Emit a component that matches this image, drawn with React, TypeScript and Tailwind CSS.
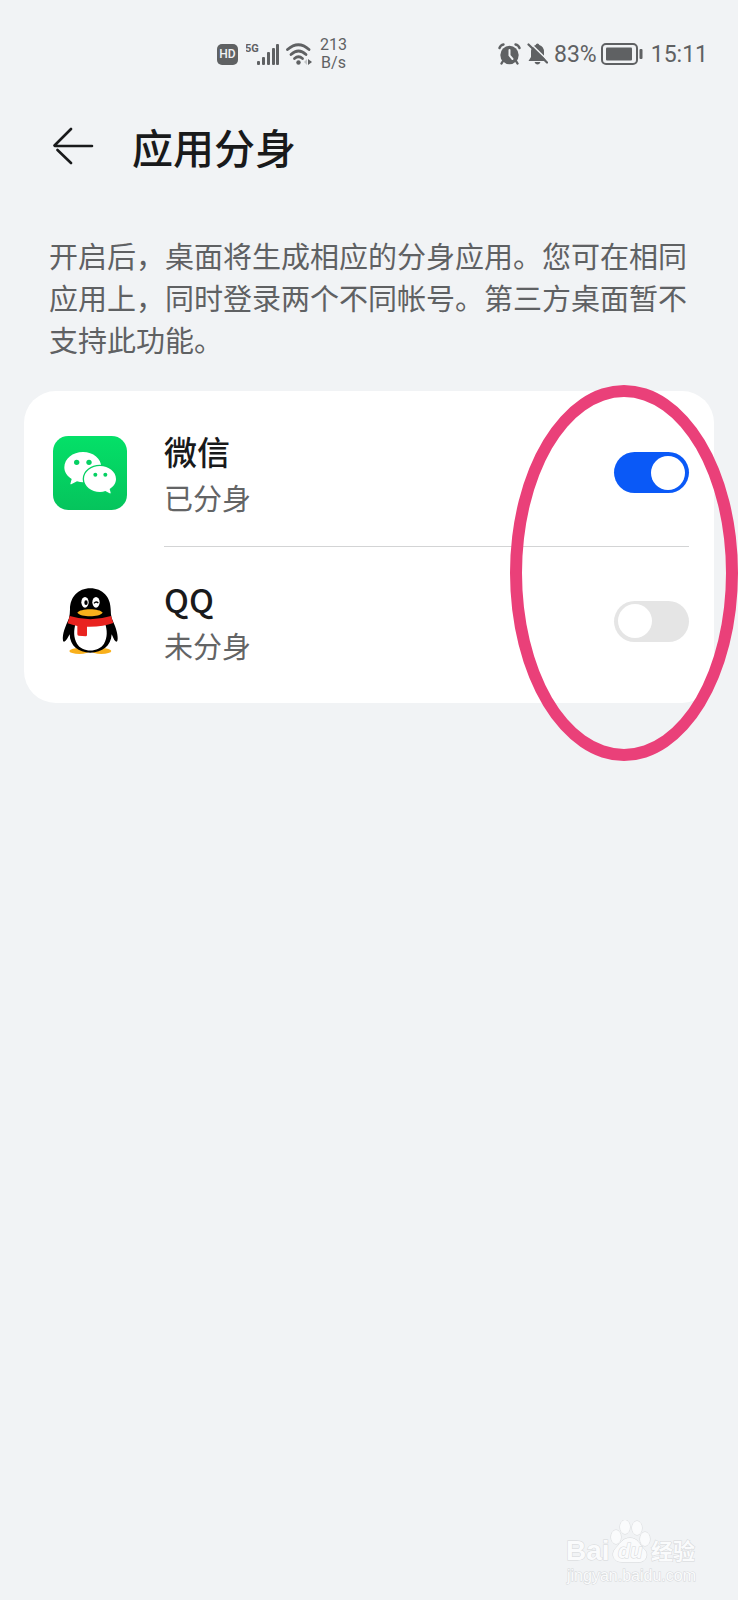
import { useState } from "react";

function StatusBar() {
  return (
    <div className="flex h-[108px] items-center justify-between pr-[30px] pl-[217px] font-['Roboto','Noto_Sans_CJK_SC',sans-serif] text-[#5f6163]">
      <div className="flex items-center">
        <div className="flex h-[21px] w-[21px] items-center justify-center rounded-[5px] bg-[#5f6163] text-[12px] leading-none font-medium text-[#f1f3f5]">
          HD
        </div>
        <svg className="ml-2 h-[22px] w-[34px]" viewBox="0 0 34 22" fill="currentColor">
          <text x="-1" y="9" fontSize="11" fontWeight="700" fontFamily="Roboto">
            5G
          </text>
          <rect x="11" y="18" width="3" height="4" rx="1" />
          <rect x="16" y="14" width="3" height="8" rx="1" />
          <rect x="21" y="9" width="3" height="13" rx="1" />
          <rect x="26" y="5" width="3" height="17" rx="1" />
          <rect x="30" y="1" width="3" height="21" rx="1" />
        </svg>
        <svg className="ml-1.5 h-[22px] w-[27px]" viewBox="0 0 27 22" fill="none">
          <g stroke="currentColor" strokeWidth="2.8" strokeLinecap="round">
            <path d="M1.500 6.500 Q12.500 -3 23 6.500" />
            <path d="M5 11.500 Q12.500 4.500 20 11.500" />
            <path d="M8.500 15.500 Q12.500 12 16.500 15.500" />
          </g>
          <circle cx="12.500" cy="19.500" r="2.200" fill="currentColor" />
          <path d="M21 16 V22 L18 19 Z" fill="#c3c5c7" />
          <path d="M22 16 V22 L26 19 Z" fill="currentColor" />
        </svg>
        <div className="ml-[7px] text-center text-base leading-[18px]">
          213
          <br />
          B/s
        </div>
      </div>

      <div className="flex items-center">
        <svg className="h-[22px] w-[23px]" viewBox="0 0 23 22" fill="none">
          <circle cx="11.500" cy="12" r="9.200" fill="currentColor" />
          <path
            d="M1.500 5 Q2.500 2 5.500 1.500 M21.500 5 Q20.500 2 17.500 1.500 M5 18 L3.500 20.500 M18 18 L19.500 20.500"
            stroke="currentColor"
            strokeWidth="2.4"
            strokeLinecap="round"
          />
          <path d="M11.500 7 V12.500 L14.500 16" stroke="#f1f3f5" strokeWidth="2" strokeLinecap="round" />
        </svg>
        <svg className="ml-1.5 h-[22px] w-[21px]" viewBox="0 0 21 22" fill="none">
          <path
            d="M10.500 .5 Q12 .5 12.300 2 Q17 3.500 17 9 V14 L19.500 18 H1.500 L4 14 V9 Q4 3.500 8.700 2 Q9 .5 10.500 .5 Z"
            fill="currentColor"
          />
          <path d="M7.500 19 H13.500 Q12.500 21.500 10.500 21.500 Q8.500 21.500 7.500 19 Z" fill="currentColor" />
          <path d="M3.500 .5 L21 17.500" stroke="#f1f3f5" strokeWidth="1.6" />
          <path d="M1.500 1.500 L20 19.500" stroke="currentColor" strokeWidth="2.2" strokeLinecap="round" />
        </svg>
        <span className="ml-1.5 text-[23px] leading-none">83%</span>
        <svg className="ml-1 h-[22px] w-[42px]" viewBox="0 0 42 22" fill="none">
          <rect x="1" y="1" width="35" height="20" rx="4" stroke="currentColor" strokeWidth="2" />
          <rect x="5" y="4.500" width="26" height="13" rx="1" fill="currentColor" />
          <rect x="38.500" y="6" width="3" height="10" rx="1" fill="currentColor" />
        </svg>
        <span className="ml-2 text-[23px] leading-none">15:11</span>
      </div>
    </div>
  );
}

function WeChatIcon() {
  return (
    <svg className="h-[74px] w-[74px] shrink-0" viewBox="39 33 222 222">
      <defs>
        <linearGradient id="wechat" x1="0" y1="0" x2="0" y2="1">
          <stop offset="0" stopColor="#04e068" />
          <stop offset="1" stopColor="#05c45c" />
        </linearGradient>
      </defs>
      <rect x="39" y="33" width="222" height="222" rx="46" fill="url(#wechat)" />
      <path
        d="M129 81 C98 81 73 101 73 127 C73 142 81 153 95 162 L91 177 Q92 179 95 177 L111 169 Q120 172 129 172 C160 172 184 152 184 127 C184 101 160 81 129 81 Z"
        fill="#fff"
      />
      <path
        d="M180 123 C154 123 132 140 132 162 C132 184 154 201 180 201 Q189 201 196 198 L209 205 Q212 206 212 203 L209 192 C220 185 228 175 228 162 C228 140 206 123 180 123 Z"
        fill="#fff"
        stroke="#05d062"
        strokeWidth="8"
        paintOrder="stroke"
      />
      <g fill="#05d062">
        <circle cx="110" cy="112" r="8" />
        <circle cx="147" cy="112" r="8" />
        <circle cx="166" cy="149" r="6" />
        <circle cx="196" cy="149" r="6" />
      </g>
    </svg>
  );
}

function QQIcon() {
  return (
    <svg className="h-[74px] w-[74px] shrink-0" viewBox="39 42 222 222">
      <ellipse cx="118" cy="243" rx="30" ry="9" fill="#f9b01c" />
      <ellipse cx="184" cy="243" rx="30" ry="9" fill="#f9b01c" />
      <path
        d="M151 55 C114 55 90 82 90 118 Q90 130 87 145 C77 168 66 192 69 212 Q72 220 81 207 L89 193 C90 228 115 248 151 248 C187 248 213 228 215 193 L223 210 Q232 222 233 207 C234 190 225 166 215 145 Q212 130 212 118 C212 82 188 55 151 55 Z"
        fill="#000"
      />
      <path
        d="M107 160 Q151 174 195 160 C202 180 203 203 192 221 C176 248 126 248 111 221 C100 203 101 180 107 160 Z"
        fill="#fff"
      />
      <path
        d="M89 138 Q151 157 213 138 L220 159 Q190 171 141 170 V195 Q141 199 137 199 L116 197 Q112 197 112 192 V168 Q97 165 83 160 Z"
        fill="#e9231f"
      />
      <ellipse cx="135" cy="97" rx="11" ry="16" fill="#fff" />
      <ellipse cx="168" cy="97" rx="11" ry="16" fill="#fff" />
      <ellipse cx="138" cy="98" rx="5" ry="7" fill="#000" />
      <path d="M162 100 Q168 93 175 99" fill="none" stroke="#000" strokeWidth="4" />
      <path d="M112 128 C120 114 180 114 188 128 C178 142 122 142 112 128 Z" fill="#f9b01c" />
    </svg>
  );
}

type AppRowProps = {
  id: string;
  name: string;
  icon: React.ReactNode;
  defaultOn?: boolean;
  status: string;
  divider?: boolean;
};

function AppRow({ id, name, icon, defaultOn = false, status, divider }: AppRowProps) {
  const [on, setOn] = useState(defaultOn);

  return (
    <li className="flex h-[148px] items-center gap-[37px] pl-[29px]">
      {icon}
      <div
        className={`mr-[25px] flex h-full flex-1 items-center justify-between ${
          divider ? "border-b border-[#d3d4d5]" : ""
        }`}
      >
        <label htmlFor={id} className="pt-0.5">
          <span className="block text-[33px] leading-[46px] font-medium text-[#191a1b]">{name}</span>
          <span className="block text-[29px] leading-[46px] text-[#636465]">{status}</span>
        </label>
        <input
          id={id}
          type="checkbox"
          role="switch"
          checked={on}
          onChange={() => setOn(!on)}
          className="flex h-[41px] w-[75px] cursor-pointer appearance-none items-center rounded-full bg-[#e5e5e5] px-1 before:h-[34px] before:w-[34px] before:rounded-full before:bg-white before:content-[''] checked:justify-end checked:bg-[#0a59f7]"
        />
      </div>
    </li>
  );
}

function Watermark() {
  return (
    <svg
      className="mt-auto mr-[34px] h-[80px] w-[140px] self-end"
      viewBox="0 0 140 80"
      fill="#fafbfc"
      stroke="#d6d8da"
      strokeWidth="1"
      fontFamily="'Liberation Sans', 'Noto Sans CJK SC', sans-serif"
      fontWeight="700"
      paintOrder="stroke"
    >
      <text x="2" y="40" fontSize="28">Bai</text>
      <ellipse cx="52" cy="17" rx="5" ry="7" />
      <ellipse cx="61" cy="7" rx="5" ry="7" />
      <ellipse cx="73" cy="8" rx="5" ry="7" />
      <ellipse cx="81" cy="19" rx="5" ry="7" />
      <path d="M66 18 C74 18 75 24 80 29 C86 35 81 43 74 42 H58 C49 42 47 34 51 29 C56 24 58 18 66 18 Z" />
      <text x="54" y="38" fontSize="20" fontStyle="italic">du</text>
      <text x="87" y="39" fontSize="22">经验</text>
      <text x="3" y="61" fontSize="16" fontWeight="400">
        jingyan.baidu.com
      </text>
    </svg>
  );
}

export default function App() {
  return (
    <div className="flex min-h-screen flex-col overflow-hidden bg-[#f1f3f5] font-['Noto_Sans_CJK_SC',sans-serif]">
      <StatusBar />

      <header className="flex h-[76px] items-center gap-[38px] pl-[53px]">
        <button aria-label="返回" className="text-[#191a1b]">
          <svg
            className="h-10 w-[41px]"
            viewBox="0 0 41 40"
            fill="none"
            stroke="currentColor"
            strokeWidth="2.6"
            strokeLinecap="round"
          >
            <path d="M2 20 H39 M18 3 L1.500 19.500 M4.500 24 L18 37" />
          </svg>
        </button>
        <h1 className="text-[41px] leading-[60px] font-medium text-[#191a1b]">应用分身</h1>
      </header>

      <main className="pt-[50px]">
        <p className="pr-10 pl-[49px] text-[29px] leading-[42px] text-[#5f6163]">
          开启后，桌面将生成相应的分身应用。您可在相同应用上，同时登录两个不同帐号。第三方桌面暂不支持此功能。
        </p>

        <section className="relative mx-6 mt-[31px] rounded-[32px] bg-white py-2">
          <ul>
            <AppRow id="wechat-clone" name="微信" status="已分身" icon={<WeChatIcon />} defaultOn divider />
            <AppRow id="qq-clone" name="QQ" status="未分身" icon={<QQIcon />} />
          </ul>
          <div className="pointer-events-none absolute -top-1.5 -right-6 h-[376px] w-[228px] rounded-[50%] border-12 border-[#ea4079]" />
        </section>
      </main>

      <Watermark />
    </div>
  );
}
